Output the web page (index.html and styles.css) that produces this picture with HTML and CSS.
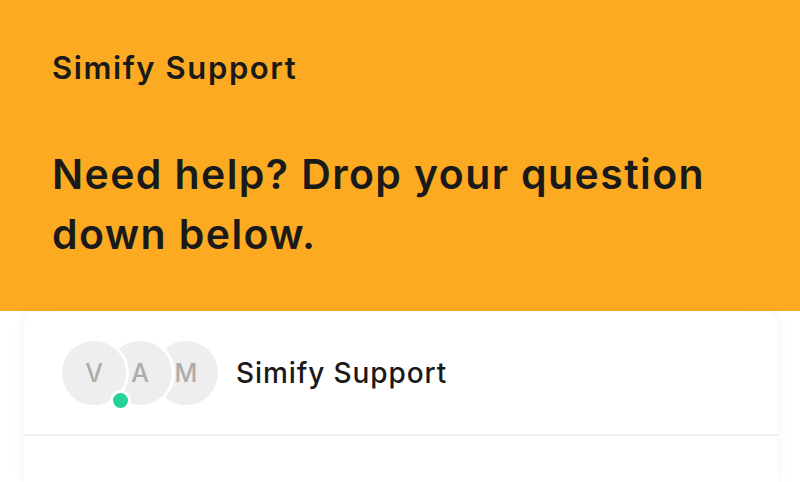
FILE: index.html
```html
<!DOCTYPE html>
<html>
<head>
<meta charset="utf-8">
<link rel="stylesheet" href="styles.css">
</head>
<body>
<header class="hero">
  <div class="brand">Simify Support</div>
  <h1 class="headline">Need help? Drop your question down below.</h1>
</header>
<section class="card">
  <div class="card-head">
    <div class="avatars">
      <div class="avatar a1">V<span class="online"></span></div>
      <div class="avatar a2">A</div>
      <div class="avatar a3">M</div>
    </div>
    <div class="team">Simify Support</div>
  </div>
  <div class="card-body"></div>
</section>
</body>
</html>
```
FILE: styles.css
```css
* { box-sizing: border-box; }
html, body { margin: 0; padding: 0; background: #fff; }
body {
  font-family: Inter, "Noto Sans", sans-serif;
  color: #1a1a1a;
  width: 800px;
  height: 482px;
  overflow: hidden;
}
.hero {
  background: #fcaa22;
  height: 311px;
  padding: 48px 52px 0 52px;
}
.brand {
  font-size: 31px;
  font-weight: 600;
  line-height: 40px;
  letter-spacing: 1.6px;
  color: #1a1a1a;
}
.headline {
  margin: 56px 0 0 0;
  font-size: 41px;
  font-weight: 600;
  line-height: 60px;
  letter-spacing: 1.4px;
  color: #1a1a1a;
  max-width: 710px;
}
.card {
  margin: 0 22px 0 24px;
  background: #fff;
  border-radius: 16px 16px 0 0;
  box-shadow: 0 0 14px rgba(0, 0, 0, 0.05);
  height: 171px;
}
.card-head {
  display: flex;
  align-items: center;
  height: 125px;
  padding: 0 0 0 35px;
  border-bottom: 2px solid #eeeeee;
}
.avatars {
  display: flex;
  align-items: center;
}
.avatar {
  position: relative;
  width: 70px;
  height: 70px;
  border-radius: 50%;
  background: #eeeeee;
  border: 3px solid #fff;
  display: flex;
  align-items: center;
  justify-content: center;
  font-size: 25px;
  font-weight: 500;
  color: #acacac;
}
.a1 { z-index: 3; }
.a2 { z-index: 2; margin-left: -24px; }
.a3 { z-index: 1; margin-left: -24px; }
.online {
  position: absolute;
  width: 21px;
  height: 21px;
  border-radius: 50%;
  background: #27d29a;
  border: 3px solid #fff;
  left: 48px;
  top: 49px;
}
.team {
  margin-left: 15px;
  font-size: 28px;
  font-weight: 500;
  letter-spacing: 0.9px;
  color: #1a1a1a;
}
```
